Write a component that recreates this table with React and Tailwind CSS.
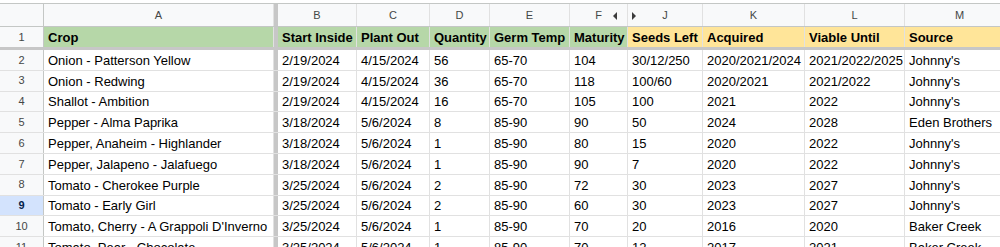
import React from 'react';

const cols = [
  { key: 'A', w: 'w-[230px]' },
  { key: 'divider' },
  { key: 'B', w: 'w-[79px]' },
  { key: 'C', w: 'w-[73px]' },
  { key: 'D', w: 'w-[60px]' },
  { key: 'E', w: 'w-[80px]' },
  { key: 'F', w: 'w-[58px]' },
  { key: 'J', w: 'w-[75px]' },
  { key: 'K', w: 'w-[102px]' },
  { key: 'L', w: 'w-[100px]' },
  { key: 'M', w: 'w-[110px]' },
];

const headings = ['Crop', 'Start Inside', 'Plant Out', 'Quantity', 'Germ Temp', 'Maturity', 'Seeds Left', 'Acquired', 'Viable Until', 'Source'];

const rows = [
  ['Onion - Patterson Yellow', '2/19/2024', '4/15/2024', '56', '65-70', '104', '30/12/250', '2020/2021/2024', '2021/2022/2025', "Johnny's"],
  ['Onion - Redwing', '2/19/2024', '4/15/2024', '36', '65-70', '118', '100/60', '2020/2021', '2021/2022', "Johnny's"],
  ['Shallot - Ambition', '2/19/2024', '4/15/2024', '16', '65-70', '105', '100', '2021', '2022', "Johnny's"],
  ['Pepper - Alma Paprika', '3/18/2024', '5/6/2024', '8', '85-90', '90', '50', '2024', '2028', 'Eden Brothers'],
  ['Pepper, Anaheim - Highlander', '3/18/2024', '5/6/2024', '1', '85-90', '80', '15', '2020', '2022', "Johnny's"],
  ['Pepper, Jalapeno - Jalafuego', '3/18/2024', '5/6/2024', '1', '85-90', '90', '7', '2020', '2022', "Johnny's"],
  ['Tomato - Cherokee Purple', '3/25/2024', '5/6/2024', '2', '85-90', '72', '30', '2023', '2027', "Johnny's"],
  ['Tomato - Early Girl', '3/25/2024', '5/6/2024', '2', '85-90', '60', '30', '2023', '2027', "Johnny's"],
  ["Tomato, Cherry - A Grappoli D'Inverno", '3/25/2024', '5/6/2024', '1', '85-90', '70', '20', '2016', '2020', 'Baker Creek'],
  ['Tomato, Pear - Chocolate', '3/25/2024', '5/6/2024', '1', '85-90', '70', '12', '2017', '2021', 'Baker Creek'],
];

const dataCols = cols.filter(c => c.key !== 'divider');

function Divider() {
  return <div className="w-[4px] shrink-0 self-stretch bg-[#c7c7c7]" />;
}

function ColumnHeader() {
  return (
    <div className="flex h-[24px] border-t border-b border-[#c4c7c5] bg-[#f8f9fa] text-[11px] text-[#444746]">
      <div className="w-[44px] shrink-0 border-r border-[#c4c7c5]" />
      {cols.map(c =>
        c.key === 'divider' ? (
          <Divider key="d" />
        ) : (
          <div
            key={c.key}
            className={`${c.w} relative shrink-0 flex items-center justify-center border-r border-[#e1e1e1]`}
          >
            {c.key}
            {c.key === 'F' && (
              <span className="absolute right-[10px] top-[8px] w-0 h-0 border-y-[4px] border-y-transparent border-r-[4px] border-r-[#3c3c3c]" />
            )}
            {c.key === 'J' && (
              <span className="absolute left-[4px] top-[8px] w-0 h-0 border-y-[4px] border-y-transparent border-l-[4px] border-l-[#3c3c3c]" />
            )}
          </div>
        )
      )}
    </div>
  );
}

function Row({ num, values, heading, selected }) {
  const height = heading ? 'h-[20px]' : 'h-[20.8px]';
  return (
    <div className={`flex ${height} ${heading ? '' : 'border-b border-[#e1e1e1]'}`}>
      <div
        className={`w-[44px] shrink-0 flex items-center justify-center border-r border-[#c4c7c5] text-[11px] ${
          selected ? 'bg-[#d3e3fd] font-bold text-[#041e49]' : 'bg-[#f8f9fa] text-[#444746]'
        }`}
      >
        {num}
      </div>
      {cols.map(c => {
        if (c.key === 'divider') return <Divider key="d" />;
        const idx = dataCols.indexOf(c);
        const bg = heading ? (idx >= 6 ? 'bg-[#ffe599]' : 'bg-[#b6d7a8]') : 'bg-white';
        return (
          <div
            key={c.key}
            className={`${c.w} ${bg} shrink-0 flex items-end pb-[1px] px-[4px] leading-[16px] overflow-hidden whitespace-nowrap border-r border-[#e1e1e1] ${
              heading ? 'font-bold' : ''
            }`}
          >
            {values[idx]}
          </div>
        );
      })}
    </div>
  );
}

export default function App() {
  return (
    <div className="w-[1000px] h-[247px] overflow-hidden bg-white pt-[3px] font-['Liberation_Sans',Arial,sans-serif] text-[13px] text-black">
      <ColumnHeader />
      <Row num={1} values={headings} heading />
      <div className="h-[3px] bg-[#c7c7c7]" />
      {rows.map((r, i) => (
        <Row key={i} num={i + 2} values={r} selected={i + 2 === 9} />
      ))}
    </div>
  );
}
